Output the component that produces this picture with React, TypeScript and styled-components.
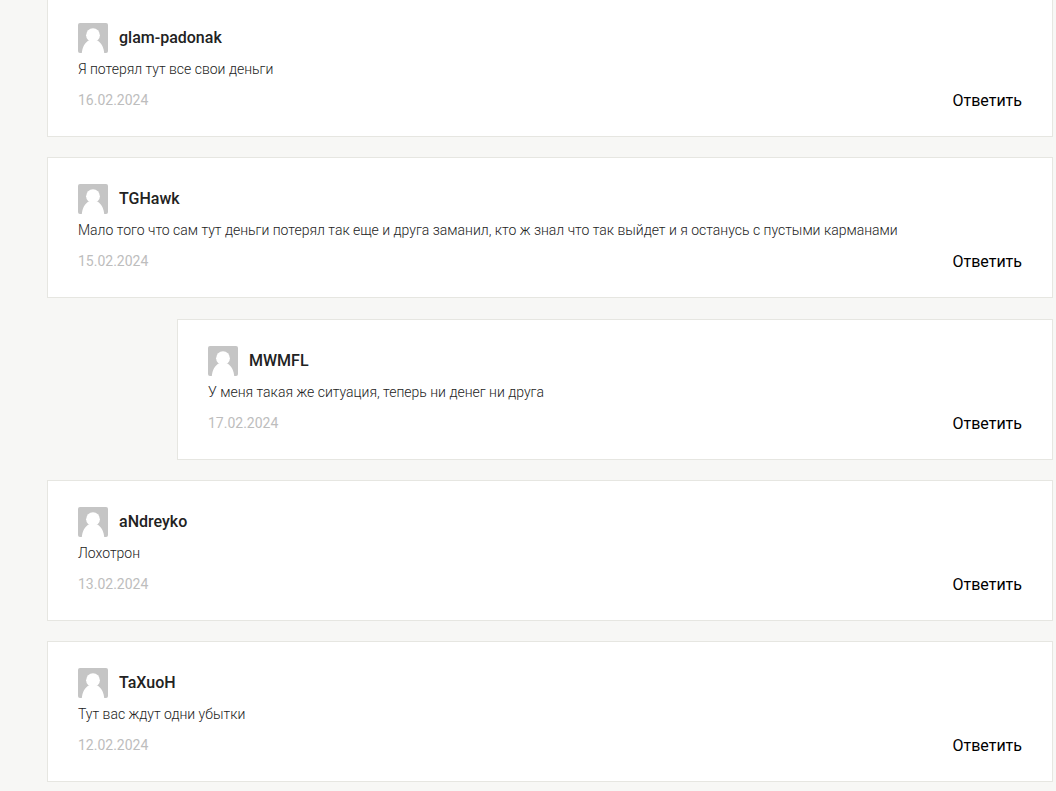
import React from "react";
import styled, { createGlobalStyle } from "styled-components";

const GlobalStyle = createGlobalStyle`
  *, *::before, *::after { box-sizing: border-box; }
  body {
    margin: 0;
    background: #f7f7f5;
    font-family: Roboto, "Liberation Sans", sans-serif;
    color: #222;
  }
`;

const Page = styled.main`
  display: flow-root;
  padding: 0 3px 8px 47px;
`;

const CommentList = styled.ol`
  display: flex;
  flex-direction: column;
  gap: 20px;
  margin: -4px 0 0;
  padding: 0;
  list-style: none;
`;

const ReplyList = styled.ol`
  margin: 21px 0 0 130px;
  padding: 0;
  list-style: none;
`;

const Card = styled.article`
  padding: 26px 30px 25px;
  background: #fff;
  border: 1px solid #e6e6e1;
`;

const Author = styled.header`
  display: flex;
  align-items: center;
  gap: 11px;
`;

const Avatar = styled.svg`
  display: block;
  width: 30px;
  height: 30px;
  border-radius: 2px;
`;

const Name = styled.h3`
  margin: 0;
  font-size: 16px;
  line-height: 30px;
  font-weight: 500;
  color: #222;
`;

const Message = styled.p`
  margin: 6px 0 12px;
  font-size: 14px;
  line-height: 20px;
  font-weight: 300;
  color: #222;
`;

const Footer = styled.footer`
  display: flex;
  align-items: flex-start;
  justify-content: space-between;
`;

const PostDate = styled.time`
  font-size: 14px;
  line-height: 18px;
  color: #bdbdbd;
`;

const ReplyLink = styled.a`
  font-size: 16px;
  line-height: 20px;
  color: #000;
  text-decoration: none;
`;

type Comment = {
  name: string;
  text: string;
  date: string;
  replies?: Comment[];
};

const comments: Comment[] = [
  { name: "glam-padonak", text: "Я потерял тут все свои деньги", date: "16.02.2024" },
  {
    name: "TGHawk",
    text: "Мало того что сам тут деньги потерял так еще и друга заманил, кто ж знал что так выйдет и я останусь с пустыми карманами",
    date: "15.02.2024",
    replies: [
      {
        name: "MWMFL",
        text: "У меня такая же ситуация, теперь ни денег ни друга",
        date: "17.02.2024",
      },
    ],
  },
  { name: "aNdreyko", text: "Лохотрон", date: "13.02.2024" },
  { name: "TaXuoH", text: "Тут вас ждут одни убытки", date: "12.02.2024" },
];

function CommentItem({ name, text, date, replies }: Comment) {
  return (
    <li>
      <Card>
        <Author>
          <Avatar viewBox="0 0 30 30" aria-hidden="true">
            <rect width="30" height="30" fill="#c5c5c5" />
            <circle cx="15" cy="12.200" r="6.900" fill="#fff" />
            <path
              fill="#fff"
              d="M10.800 17.500C7 19.300 4.200 24.300 3.800 30h22.400c-.4-5.700-3.200-10.700-7-12.500z"
            />
          </Avatar>
          <Name>{name}</Name>
        </Author>
        <Message>{text}</Message>
        <Footer>
          <PostDate dateTime={date.split(".").reverse().join("-")}>{date}</PostDate>
          <ReplyLink href="#reply">Ответить</ReplyLink>
        </Footer>
      </Card>
      {replies && (
        <ReplyList>
          {replies.map((reply) => (
            <CommentItem key={reply.name} {...reply} />
          ))}
        </ReplyList>
      )}
    </li>
  );
}

export default function App() {
  return (
    <>
      <GlobalStyle />
      <Page>
        <CommentList>
          {comments.map((comment) => (
            <CommentItem key={comment.name} {...comment} />
          ))}
        </CommentList>
      </Page>
    </>
  );
}
